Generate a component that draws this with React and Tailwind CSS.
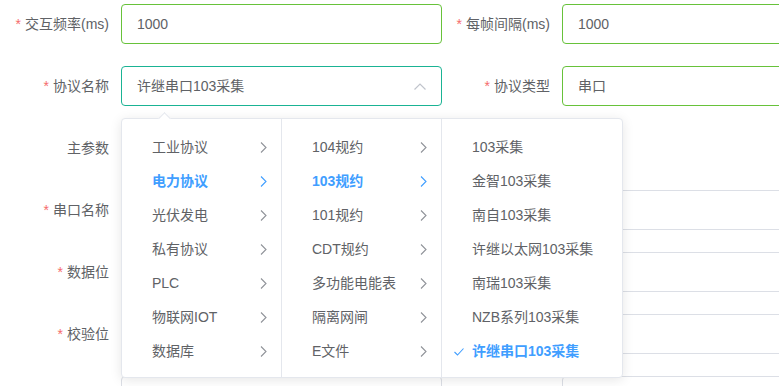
import React from "react";

const font = { fontFamily: '"Liberation Sans", "Noto Sans CJK SC", sans-serif' };

const level1 = ["工业协议", "电力协议", "光伏发电", "私有协议", "PLC", "物联网IOT", "数据库"];
const level2 = ["104规约", "103规约", "101规约", "CDT规约", "多功能电能表", "隔离网闸", "E文件"];
const level3 = ["103采集", "金智103采集", "南自103采集", "许继以太网103采集", "南瑞103采集", "NZB系列103采集", "许继串口103采集"];

function ChevronRight({ active }) {
  return (
    <svg width="7" height="11" viewBox="0 0 7 11" className="shrink-0">
      <polyline
        points="1,0.5 6,5.5 1,10.5"
        fill="none"
        stroke={active ? "#409eff" : "#909399"}
        strokeWidth="1.1"
      />
    </svg>
  );
}

function Label({ text, required, width = "w-[121px]" }) {
  return (
    <div className={`${width} shrink-0 pr-3 text-right text-sm leading-[40px] text-[#606266]`}>
      {required && <span className="mr-1 text-[#f56c6c]">*</span>}
      {text}
    </div>
  );
}

function Input({ value, border = "border-[#dcdfe6]", children }) {
  return (
    <div
      className={`w-[321px] h-[40px] shrink-0 rounded border ${border} flex items-center px-[15px] text-sm text-[#606266]`}
    >
      <span className="flex-1">{value}</span>
      {children}
    </div>
  );
}

function Column({ items, active, last }) {
  return (
    <div
      className={`${last ? "w-[180px]" : "w-[160px] border-r border-[#e4e7ed]"} pt-[11px] pb-[9px]`}
    >
      {items.map((it) => {
        const on = it === active;
        return (
          <div
            key={it}
            className={`relative h-[34px] flex items-center justify-between pl-[30px] pr-[14px] text-sm ${
              on ? "text-[#409eff] font-bold" : "text-[#606266]"
            }`}
          >
            {last && on && (
              <svg width="10" height="8" viewBox="0 0 10 8" className="absolute left-[12px] top-[14px]">
                <polyline points="0.5,4 3.5,7 9.5,0.5" fill="none" stroke="#409eff" strokeWidth="1.1" />
              </svg>
            )}
            <span>{it}</span>
            {!last && <ChevronRight active={on} />}
          </div>
        );
      })}
    </div>
  );
}

export default function App() {
  return (
    <div className="relative w-[779px] h-[386px] overflow-hidden bg-white" style={font}>
      <div className="flex flex-col gap-[22px] pt-[4px]">
        <div className="flex">
          <Label text="交互频率(ms)" required />
          <Input value="1000" border="border-[#67c23a]" />
          <Label text="每帧间隔(ms)" required width="w-[120px]" />
          <Input value="1000" border="border-[#67c23a]" />
        </div>
        <div className="flex">
          <Label text="协议名称" required />
          <Input value="许继串口103采集" border="border-[#1ab394]">
            <svg width="12" height="7" viewBox="0 0 12 7">
              <polyline points="0.5,6.5 6,1 11.5,6.5" fill="none" stroke="#c0c4cc" strokeWidth="1.2" />
            </svg>
          </Input>
          <Label text="协议类型" required width="w-[120px]" />
          <Input value="串口" border="border-[#67c23a]" />
        </div>
        <div className="flex h-[40px]">
          <Label text="主参数" />
        </div>
        <div className="flex">
          <Label text="串口名称" required />
          <Input value="" />
          <Label text="" width="w-[120px]" />
          <Input value="" />
        </div>
        <div className="flex">
          <Label text="数据位" required />
          <Input value="" />
          <Label text="" width="w-[120px]" />
          <Input value="" />
        </div>
        <div className="flex">
          <Label text="校验位" required />
          <Input value="" />
          <Label text="" width="w-[120px]" />
          <Input value="" />
        </div>
        <div className="flex">
          <Label text="" />
          <Input value="" />
          <Label text="" width="w-[120px]" />
          <Input value="" />
        </div>
      </div>

      <div className="absolute left-[121px] top-[118px] flex rounded border border-[#e4e7ed] bg-white shadow-[0_2px_12px_rgba(0,0,0,0.1)]">
        <div className="absolute left-[38px] top-[-5px] w-[9px] h-[9px] rotate-45 bg-white border-l border-t border-[#e4e7ed]" />
        <Column items={level1} active="电力协议" />
        <Column items={level2} active="103规约" />
        <Column items={level3} active="许继串口103采集" last />
      </div>
    </div>
  );
}
